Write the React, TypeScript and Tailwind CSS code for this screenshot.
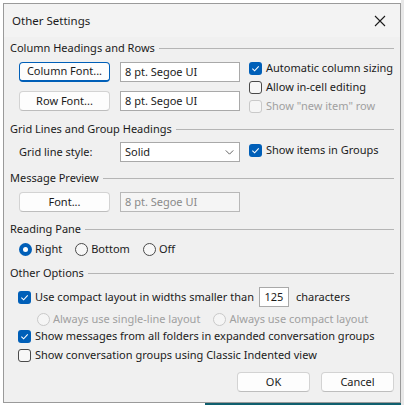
import type { ReactNode } from 'react'

const font = { fontFamily: '"Segoe UI", "Noto Sans", sans-serif' }

function GroupHeader({ title }: { title: string }) {
  return (
    <div className="flex h-4 items-center gap-1 pr-[6px]">
      <span className="whitespace-nowrap">{title}</span>
      <div className="h-px flex-1 bg-[#b5b5b5]" />
    </div>
  )
}

function Checkbox({ checked, disabled }: { checked?: boolean; disabled?: boolean }) {
  if (checked) {
    return (
      <span className="flex h-[13px] w-[13px] shrink-0 items-center justify-center rounded-[3px] bg-[#005fb8]">
        <svg viewBox="0 0 10 10" className="h-[9px] w-[9px]" fill="none" stroke="white" strokeWidth="1.2">
          <path d="M1.5 5.2 L4 7.6 L8.6 2.6" />
        </svg>
      </span>
    )
  }
  return (
    <span
      className={
        disabled
          ? 'h-[13px] w-[13px] shrink-0 rounded-[3px] border border-[#c9c9c9] bg-[#f5f5f5]'
          : 'h-[13px] w-[13px] shrink-0 rounded-[3px] border border-[#4a4a4a] bg-[#f7f7f7]'
      }
    />
  )
}

function CheckRow({ checked, disabled, children }: { checked?: boolean; disabled?: boolean; children: ReactNode }) {
  return (
    <div className={disabled ? 'flex h-[19px] items-center gap-[4px] text-[#a0a0a0]' : 'flex h-[19px] items-center gap-[4px]'}>
      <Checkbox checked={checked} disabled={disabled} />
      <span className="whitespace-nowrap">{children}</span>
    </div>
  )
}

function Radio({ checked, disabled, label }: { checked?: boolean; disabled?: boolean; label: string }) {
  return (
    <div className={disabled ? 'flex items-center gap-[3px] text-[#a0a0a0]' : 'flex items-center gap-[3px]'}>
      {checked ? (
        <span className="flex h-[13px] w-[13px] items-center justify-center rounded-full bg-[#005fb8]">
          <span className="h-[5px] w-[5px] rounded-full bg-white" />
        </span>
      ) : (
        <span
          className={
            disabled
              ? 'h-[13px] w-[13px] rounded-full border border-[#c9c9c9] bg-[#f5f5f5]'
              : 'h-[13px] w-[13px] rounded-full border border-[#4a4a4a] bg-[#f7f7f7]'
          }
        />
      )}
      <span className="whitespace-nowrap">{label}</span>
    </div>
  )
}

function Button({ label, focused, width = 'w-[91px]' }: { label: string; focused?: boolean; width?: string }) {
  return (
    <div
      className={
        focused
          ? `flex h-[20px] ${width} items-center justify-center rounded-[4px] border border-[#005fb8] border-b-2 bg-[#fdfdfd]`
          : `flex h-[20px] ${width} items-center justify-center rounded-[4px] border border-[#d3d3d3] border-b-[#bdbdbd] bg-[#fdfdfd]`
      }
    >
      {label}
    </div>
  )
}

function TextBox({ value, disabled }: { value: string; disabled?: boolean }) {
  return (
    <div
      className={
        disabled
          ? 'flex h-[20px] w-[120px] items-center border border-[#b8b8b8] bg-[#f5f5f5] pl-[4px] text-[#8a8a8a]'
          : 'flex h-[20px] w-[120px] items-center border border-[#a9a9a9] bg-white pl-[4px]'
      }
    >
      {value}
    </div>
  )
}

export default function App() {
  return (
    <div className="relative h-[405px] w-[404px] overflow-hidden bg-white" style={font}>
      <div className="absolute bottom-0 left-[205px] h-[2px] w-[199px] bg-[#0f5f6e]" />
      <div className="absolute right-0 top-0 h-full w-[3px] bg-[#e8e8e8]" />
      <div className="relative ml-[3px] mt-[3px] flex h-[400px] w-[398px] flex-col border border-[#9a9a9a] bg-[#f0f0f0] text-[11px] text-[#1b1b1b]">
        <div className="flex h-[33px] items-center justify-between bg-[#f3f3f3] pl-[8px] pr-[14px]">
          <span className="text-[11.5px]">Other Settings</span>
          <svg viewBox="0 0 12 12" className="h-[12px] w-[12px]" fill="none" stroke="#1b1b1b" strokeWidth="1.1">
            <path d="M1 1 L11 11 M11 1 L1 11" />
          </svg>
        </div>

        <div className="flex flex-col pl-[6px]">
          <div className="mt-[3px]">
            <GroupHeader title="Column Headings and Rows" />
          </div>
          <div className="flex">
            <div className="ml-[9px] mt-[6px] flex flex-col gap-[9px]">
              <div className="flex gap-[10px]">
                <Button label="Column Font..." focused />
                <TextBox value="8 pt. Segoe UI" />
              </div>
              <div className="flex gap-[10px]">
                <Button label="Row Font..." />
                <TextBox value="8 pt. Segoe UI" />
              </div>
            </div>
            <div className="ml-[9px] mt-[3px] flex flex-col">
              <CheckRow checked>Automatic column sizing</CheckRow>
              <CheckRow>Allow in-cell editing</CheckRow>
              <CheckRow disabled>Show "new item" row</CheckRow>
            </div>
          </div>

          <div className="mt-[5px]">
            <GroupHeader title="Grid Lines and Group Headings" />
          </div>
          <div className="mt-[5px] flex items-center">
            <span className="ml-[9px] w-[101px]">Grid line style:</span>
            <div className="flex h-[20px] w-[120px] items-center justify-between border border-[#a9a9a9] bg-white pl-[4px] pr-[5px]">
              <span>Solid</span>
              <svg viewBox="0 0 10 6" className="h-[5px] w-[9px]" fill="none" stroke="#444" strokeWidth="1">
                <path d="M0.5 0.5 L5 5 L9.5 0.5" />
              </svg>
            </div>
            <div className="ml-[9px] -mt-[4px]">
              <CheckRow checked>Show items in Groups</CheckRow>
            </div>
          </div>

          <div className="mt-[8px]">
            <GroupHeader title="Message Preview" />
          </div>
          <div className="ml-[9px] mt-[6px] flex gap-[10px]">
            <Button label="Font..." />
            <TextBox value="8 pt. Segoe UI" disabled />
          </div>

          <div className="mt-[9px]">
            <GroupHeader title="Reading Pane" />
          </div>
          <div className="ml-[9px] mt-[4px] flex h-4 items-center gap-[13px]">
            <Radio checked label="Right" />
            <Radio label="Bottom" />
            <Radio label="Off" />
          </div>

          <div className="mt-[8px]">
            <GroupHeader title="Other Options" />
          </div>
          <div className="ml-[8px] mt-[6px] flex h-[20px] items-center">
            <CheckRow checked>Use compact layout in widths smaller than</CheckRow>
            <div className="ml-[5px] flex h-[20px] w-[30px] items-center justify-center border border-[#a9a9a9] bg-white">
              125
            </div>
            <span className="ml-[7px]">characters</span>
          </div>
          <div className="ml-[27px] mt-[4px] flex h-4 items-center gap-[13px]">
            <Radio disabled label="Always use single-line layout" />
            <Radio disabled label="Always use compact layout" />
          </div>
          <div className="ml-[8px] flex flex-col">
            <CheckRow checked>Show messages from all folders in expanded conversation groups</CheckRow>
            <CheckRow>Show conversation groups using Classic Indented view</CheckRow>
          </div>

          <div className="mt-[7px] flex justify-end gap-[11px] pr-[6px]">
            <Button label="OK" width="w-[73px]" />
            <Button label="Cancel" width="w-[73px]" />
          </div>
        </div>
      </div>
    </div>
  )
}
